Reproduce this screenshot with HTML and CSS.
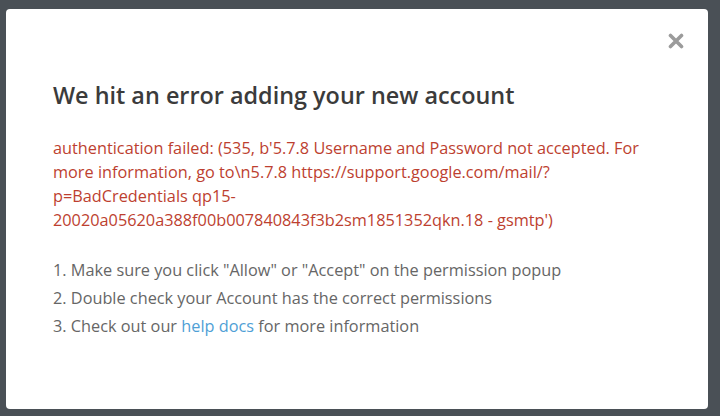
FILE: index.html
```html
<!DOCTYPE html>
<html>
<head>
<meta charset="utf-8">
<link rel="stylesheet" href="styles.css">
</head>
<body>
<div class="modal">
  <div class="close-row">
    <svg class="close" width="16" height="16" viewBox="0 0 16 16"><path d="M2.5 2.5 L13.5 13.5 M13.5 2.5 L2.5 13.5" stroke="#9b9b9b" stroke-width="3.6" stroke-linecap="round"/></svg>
  </div>
  <h1 class="title">We hit an error adding your new account</h1>
  <p class="error">authentication failed: (535, b'5.7.8 Username and Password not accepted. For more information, go to\n5.7.8 https://support.google.com/mail/?p=BadCredentials qp15-20020a05620a388f00b007840843f3b2sm1851352qkn.18 - gsmtp')</p>
  <ol class="steps">
    <li>1. Make sure you click "Allow" or "Accept" on the permission popup</li>
    <li>2. Double check your Account has the correct permissions</li>
    <li>3. Check out our <a class="link" href="#">help docs</a> for more information</li>
  </ol>
</div>
</body>
</html>
```
FILE: styles.css
```css
html, body {
  margin: 0;
  padding: 0;
  background: #4a5056;
  width: 720px;
  height: 416px;
  overflow: hidden;
}
body {
  padding: 9px 0 0 6px;
  box-sizing: border-box;
  font-family: "Open Sans", "Liberation Sans", sans-serif;
}
.modal {
  width: 702px;
  height: 400px;
  background: #ffffff;
  border-radius: 4px;
  box-sizing: border-box;
  padding: 24px 24px 0 47px;
}
.close-row {
  display: flex;
  justify-content: flex-end;
  height: 47px;
}
.close {
  display: block;
}
.title {
  margin: 0;
  font-size: 23.4px;
  line-height: 30px;
  font-weight: 600;
  color: #3b3b3b;
}
.error {
  margin: 26px 0 0 0;
  width: 605px;
  font-size: 16.3px;
  line-height: 24px;
  color: #bd3f30;
}
.steps {
  list-style: none;
  margin: 24px 0 0 0;
  padding: 0;
  font-size: 16.3px;
  line-height: 28px;
  color: #666666;
}
.link {
  color: #4f9fd6;
  text-decoration: none;
}
```
